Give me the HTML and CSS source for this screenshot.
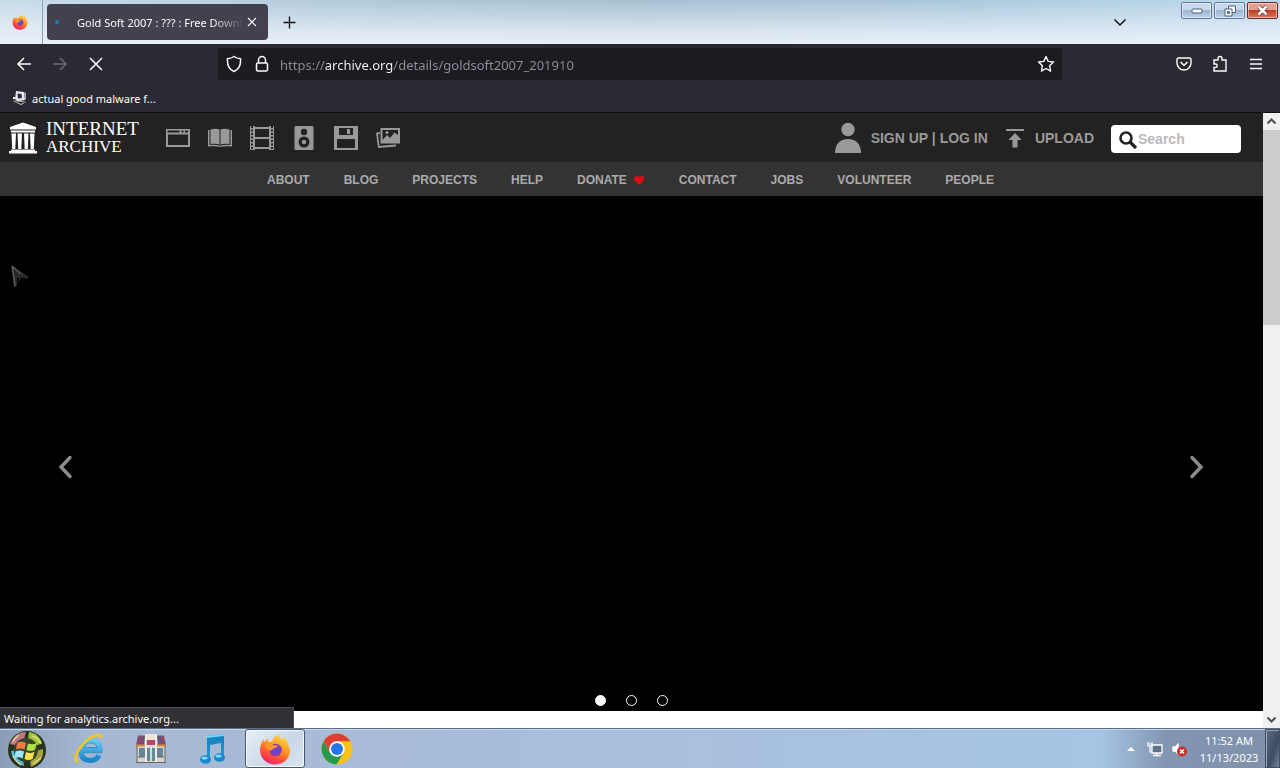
FILE: index.html
```html
<!DOCTYPE html>
<html lang="en">
<head>
<meta charset="utf-8">
<title>Gold Soft 2007 : ??? : Free Download</title>
<link rel="stylesheet" href="styles.css">
</head>
<body>
<svg width="0" height="0" class="defs" aria-hidden="true">
  <defs>
    <linearGradient id="ffFlame" x1="0.8" y1="0" x2="0.3" y2="1"><stop offset="0" stop-color="#ffe345"/><stop offset=".45" stop-color="#ff9525"/><stop offset=".75" stop-color="#ff4a3c"/><stop offset="1" stop-color="#e5207a"/></linearGradient>
    <radialGradient id="ffGlobe"><stop offset="0" stop-color="#5a4bd8"/><stop offset="1" stop-color="#8a3bb0"/></radialGradient>
    <linearGradient id="note" x1="0" y1="0" x2="0" y2="1"><stop offset="0" stop-color="#1580b8"/><stop offset="1" stop-color="#1d9be0"/></linearGradient>
    <linearGradient id="ieBlue" x1="0" y1="0" x2="0" y2="1"><stop offset="0" stop-color="#6cc8f2"/><stop offset="1" stop-color="#1b86cc"/></linearGradient>
    <symbol id="firefox" viewBox="0 0 32 32">
      <path fill="url(#ffFlame)" d="M19 1c0 2 2 4 4 5.500 1-1 1-2 .5-3.500 3 2 4.500 5 5 7.500 2 3 3 6 2.300 9.500C29.500 27 23.500 31.500 16 31.500 7.500 31.500 1 25 1 17c0-4 1.500-8 3.500-11 0 1.500.5 2.500 1 3l3-4c0 2 .5 3 1.500 4 1-.5 2-.5 3-.5 1-3 3-6 6-7.500z"/>
      <circle cx="16.500" cy="17" r="6.300" fill="url(#ffGlobe)"/>
      <path fill="#ff9428" d="M7 11.500c3-1.500 5.500-1 7.500.8 1.300 0 3 0 4.500.7-1 1.600-3 2-4.800 2.400-.6 1.400-2 1.800-3.200 2.400-2-1-4-3-4-6.300z"/>
    </symbol>
  </defs>
</svg>

<header class="browser">
  <div class="tabs">
    <div class="pinned"><svg width="16" height="16"><use href="#firefox"/></svg></div>
    <div class="tab">
      <span class="loading"></span>
      <span class="tab-title">Gold Soft 2007 : ??? : Free Downl</span>
      <button class="plain" aria-label="Close tab"><svg width="10" height="10" viewBox="0 0 10 10" fill="none" stroke="#f4f4f8" stroke-width="1.200"><path d="M1 1l8 8M9 1L1 9"/></svg></button>
    </div>
    <button class="plain new-tab" aria-label="New tab"><svg width="13" height="13" viewBox="0 0 13 13" stroke="#15141a" stroke-width="1.400"><path d="M6.500 0.500v12M.5 6.500h12"/></svg></button>
    <button class="plain list-tabs" aria-label="List all tabs"><svg width="14" height="9" viewBox="0 0 14 9" fill="none" stroke="#15141a" stroke-width="1.500"><path d="M1.500 1.500L7 7l5.500-5.500"/></svg></button>
    <div class="window-buttons">
      <button aria-label="Minimize"><svg width="12" height="6" viewBox="0 0 12 6"><rect x="1" y="1" width="10" height="4" rx="1" fill="#fff" stroke="#4b5c7a"/></svg></button>
      <button aria-label="Restore"><svg width="14" height="12" viewBox="0 0 14 12" fill="#fff" stroke="#4b5c7a"><path d="M5.500 1h7v6.500h-7z"/><path d="M2 4h7v7H2z"/><path fill="#8da6c8" d="M4.500 6.500h2v2h-2z"/></svg></button>
      <button class="close" aria-label="Close"><svg width="13" height="11" viewBox="0 0 13 11" fill="none"><path d="M2.500 1.500l8 8M10.500 1.500l-8 8" stroke="#713036" stroke-width="4"/><path d="M2.500 1.500l8 8M10.500 1.500l-8 8" stroke="#fff" stroke-width="2.500"/></svg></button>
    </div>
  </div>

  <div class="toolbar">
    <div class="history">
      <button class="plain" aria-label="Back"><svg width="16" height="14" viewBox="0 0 16 14" fill="none" stroke="#fbfbfe" stroke-width="1.500"><path d="M15 7H2M8 1L2 7l6 6"/></svg></button>
      <button class="plain" aria-label="Forward"><svg width="16" height="14" viewBox="0 0 16 14" fill="none" stroke="#6c6b73" stroke-width="1.500"><path d="M1 7h13M8 1l6 6-6 6"/></svg></button>
      <button class="plain" aria-label="Stop"><svg width="14" height="14" viewBox="0 0 14 14" fill="none" stroke="#fbfbfe" stroke-width="1.500"><path d="M1 1l12 12M13 1L1 13"/></svg></button>
    </div>
    <div class="address">
      <svg width="16" height="18" viewBox="0 0 16 18" fill="none" stroke="#fbfbfe" stroke-width="1.500"><path d="M8 1.500c2 1.500 4 2 6.500 2.200C15 10 13 14.500 8 16.500 3 14.500 1 10 1.500 3.700 4 3.500 6 3 8 1.500z"/></svg>
      <svg width="14" height="18" viewBox="0 0 14 18" fill="none" stroke="#fbfbfe" stroke-width="1.500"><rect x="1.500" y="8" width="11" height="8" rx="1.500"/><path d="M3.500 8V5a3.500 3.500 0 0 1 7 0v3"/></svg>
      <input class="url" type="text" aria-label="Address" value="https://archive.org/details/goldsoft2007_201910">
      <button class="plain" aria-label="Bookmark this page"><svg width="18" height="18" viewBox="0 0 18 18" fill="none" stroke="#fbfbfe" stroke-width="1.400" stroke-linejoin="round"><path d="M9 1.500l2.200 4.900 5.300.6-3.900 3.700 1 5.400L9 13.500l-4.600 2.600 1-5.400L1.500 7l5.300-.6z"/></svg></button>
    </div>
    <div class="tools">
      <button class="plain" aria-label="Save to Pocket"><svg width="16" height="14" viewBox="0 0 16 14" fill="none" stroke="#fbfbfe" stroke-width="1.400"><path d="M2.500 1h11Q15 1 15 2.500V6a7 7 0 0 1-14 0V2.500Q1 1 2.500 1z"/><path d="M4.500 5L8 8.300 11.500 5"/></svg></button>
      <button class="plain" aria-label="Extensions"><svg width="16" height="18" viewBox="0 0 16 18" fill="none" stroke="#fbfbfe" stroke-width="1.400"><path d="M2 5h4V3.500a2 2 0 0 1 4 0V5h4v11H2v-3.500h1.500a1.700 1.700 0 0 0 0-3.500H2z"/></svg></button>
      <button class="plain" aria-label="Menu"><svg width="14" height="12" viewBox="0 0 14 12" stroke="#fbfbfe" stroke-width="1.400"><path d="M1 1.500h12M1 6h12M1 10.500h12"/></svg></button>
    </div>
  </div>

  <div class="bookmarks">
    <a href="#"><svg width="16" height="16" viewBox="0 0 16 16"><path fill="#e8e8e2" d="M4 1l8 1 1 8-7 1-3-2z"/><path fill="#222755" d="M5.500 3.500l4 .5.5 4-4 .5z"/><path fill="#aaa" d="M12 2l2 1v6l-1 1z"/><path fill="#ddd" d="M1 11l5-1 8 2-5 3z"/><path stroke="#555" d="M3 11.500l6 2 4-1.500"/><path fill="#fff" d="M1 7h2v2H1z"/></svg>actual good malware f...</a>
  </div>
</header>

<div class="viewport">
  <main class="page">
    <div class="site-top">
      <a class="brand" href="#">
        <svg width="28" height="32" viewBox="0 0 28 32" fill="#fff"><path d="M14 0.500L27 5v2.500H1V5zM2 8.500h24v2H2zM2.500 11.500h4.500l-.7 15.500H3.200zM8.500 11.500h4.500l-.7 15.500H9.200zM15 11.500h4.500l-.7 15.500h-3.100zM21 11.500h4.500l-.7 15.500h-3.100zM2 27.500h24V29H2zM0 29h28v2.500H0z"/></svg>
        <span class="wordmark"><span>INTERNET</span><span class="second">ARCHIVE</span></span>
      </a>
      <nav class="media" aria-label="Media">
        <a href="#" aria-label="Web"><svg width="26" height="26" viewBox="0 0 26 26"><path fill="#999" fill-rule="evenodd" d="M1 4h24v18H1zm2 5.500V20h20V9.500zM2.500 5.500v2h12v-2zm14 0v2h2v-2zm3.500 0v2h3v-2z"/></svg></a>
        <a href="#" aria-label="Texts"><svg width="26" height="26" viewBox="0 0 26 26" fill="#999"><path d="M3.500 4.500C7 3.500 10 3.500 12.500 4.500v15c-3-1-6-1-9-.5zM22.500 4.500C19 3.500 16 3.500 13.500 4.500v15c3-1 6-1 9-.5zM1 5h1.500v15c4-.6 7-.5 9.500.5h2c2.500-1 5.500-1.100 9.500-.5V5H25v16.500c-4-.5-8-.5-10 .3h-4c-2-.8-6-.8-10-.3z"/></svg></a>
        <a href="#" aria-label="Video"><svg width="26" height="26" viewBox="0 0 26 26"><path fill="#999" fill-rule="evenodd" d="M1 1h24v24H1zm5 3v8h14V4zm0 10v8h14v-8z"/><path stroke="#222" stroke-width="2" stroke-dasharray="2 1.500" d="M3 1v24M23 1v24"/><path stroke="#222" d="M6 1.500h14M6 24.500h14"/></svg></a>
        <a href="#" aria-label="Audio"><svg width="26" height="26" viewBox="0 0 26 26"><rect x="3.500" y="1" width="19" height="24" rx="1.500" fill="#999"/><circle cx="13" cy="7" r="3.200" fill="#222"/><circle cx="13" cy="17" r="5.500" fill="#222"/><circle cx="13" cy="17" r="2.200" fill="#999"/></svg></a>
        <a href="#" aria-label="Software"><svg width="26" height="26" viewBox="0 0 26 26"><path fill="#999" fill-rule="evenodd" d="M1 1h24v24H1zm5 2v7h14V3zm8 1h3v5h-3zM4 14v9h18v-9z"/></svg></a>
        <a href="#" aria-label="Images"><svg width="26" height="26" viewBox="0 0 26 26"><path fill="none" stroke="#999" stroke-width="1.800" d="M5 8l-3 .5 1.800 13.500L21 20.500"/><path fill="#999" fill-rule="evenodd" d="M5.500 3H25v15.500H5.500zm2 2v10l4.500-5 3 3 4.500-5.500L23 10V5z"/><circle cx="12" cy="7.500" r="1.500" fill="#999"/></svg></a>
      </nav>
      <div class="account">
        <a class="login" href="#"><svg width="26" height="32" viewBox="0 0 26 32" fill="#999"><circle cx="13" cy="7.500" r="6.700"/><path d="M0 31c0-9 5-14 13-14s13 5 13 14z"/></svg><span>SIGN UP | LOG IN</span></a>
        <a class="upload" href="#"><svg width="20" height="20" viewBox="0 0 20 20" fill="#999"><path d="M1 1h18v2H1zM10 5l6.500 7H12.500v7.500h-5V12H3.500z"/></svg><span>UPLOAD</span></a>
        <label class="search"><svg width="20" height="20" viewBox="0 0 20 20" fill="none" stroke="#222"><circle cx="8" cy="8" r="5.500" stroke-width="2.600"/><path stroke-width="3.200" d="M12 12l6 6"/></svg><input type="text" placeholder="Search" aria-label="Search"></label>
      </div>
    </div>
    <nav class="site-nav" aria-label="Site">
      <a href="#">ABOUT</a><a href="#">BLOG</a><a href="#">PROJECTS</a><a href="#">HELP</a><a class="donate" href="#">DONATE <svg width="12" height="10" viewBox="0 0 12 10"><path fill="#e00b16" d="M6 10L1.500 5.500C-.5 3 2.500-1 6 2c3.500-3 6.500 1 4.500 3.500z"/></svg></a><a href="#">CONTACT</a><a href="#">JOBS</a><a href="#">VOLUNTEER</a><a href="#">PEOPLE</a>
    </nav>
    <section class="theatre" aria-label="Carousel">
      <div class="arrows">
        <button class="plain" aria-label="Previous"><svg width="16" height="24" viewBox="0 0 16 24" fill="none" stroke="#8c8c8c" stroke-width="3.400" stroke-linecap="round"><path d="M12 2.500L3 12l9 9.500"/></svg></button>
        <button class="plain" aria-label="Next"><svg width="16" height="24" viewBox="0 0 16 24" fill="none" stroke="#8c8c8c" stroke-width="3.400" stroke-linecap="round"><path d="M3 2.500L12 12l-9 9.500"/></svg></button>
      </div>
      <div class="dots"><button class="dot current" aria-label="Slide 1"></button><button class="dot" aria-label="Slide 2"></button><button class="dot" aria-label="Slide 3"></button></div>
      <svg class="pointer" width="20" height="24" viewBox="0 0 20 24"><path fill="#2a2a2a" d="M1 1l17 11-2 2-6-1.500L5 22H3z"/><path fill="none" stroke="#5c5c5c" stroke-width="1.500" d="M1 1l3 20M1 1l9 8"/><path fill="#000" d="M8 14l-2 7V12z"/></svg>
    </section>
  </main>
  <div class="scrollbar" aria-hidden="true">
    <svg width="17" height="17" viewBox="0 0 17 17" fill="none" stroke="#505050" stroke-width="2"><path d="M4.500 10.500l4-4 4 4"/></svg>
    <div class="track"><div class="thumb"></div></div>
    <svg width="17" height="17" viewBox="0 0 17 17" fill="none" stroke="#505050" stroke-width="2"><path d="M4.500 6.500l4 4 4-4"/></svg>
  </div>
  <div class="status">Waiting for analytics.archive.org...</div>
</div>

<footer class="taskbar">
  <button class="plain start" aria-label="Start"><svg width="40" height="40" viewBox="0 0 40 40"><circle cx="20" cy="21" r="19" fill="#26331f"/><path fill="#bf7787" d="M3 15C6 7 12 3 19 3l-2 7-9 6z"/><path fill="#9cc435" d="M22 3c7 1 11 5 13 11l-6 3-8-6z"/><path fill="#58b8d8" d="M4 22l6-1 6 9 1 7C10 35 5 30 4 22z"/><path fill="#a8a33a" d="M29 22l7-2c1 9-4 15-12 18l-1-7z"/><circle cx="19" cy="21" r="12" fill="#33452a"/><path fill="#f07a45" d="M10 14c3-2 6-2 9 0l-1.500 6.500c-3-1.500-5-1.500-8.500 0z"/><path fill="#b5e04a" d="M21 14.500c3 1.200 6 1 9-.8l-2 7c-3 1.500-6 1.500-8.500.3z"/><path fill="#9fe6ff" d="M8.500 22.500c3-1.500 6-1.500 8.500 0l-1.500 7c-3-1.800-5.500-1.500-8 0z"/><path fill="#ffe14f" d="M19 23c3 1.300 5.500 1.300 8.500-.3l-2 7.300c-3 1.500-5.500 1.200-8 0z"/><path fill="none" stroke="#e3dc86" stroke-width="1.300" d="M6 27c2 5 5 7 8 9M25 7c4 1 7 4 9 8M26 35l8-6M6 13c1-3 3-5 6-7"/></svg></button>
  <button class="plain app" aria-label="Internet Explorer"><svg width="32" height="32" viewBox="0 0 34 34"><path fill="none" stroke="url(#ieBlue)" stroke-width="5.500" d="M9 18h20c0-7-5-10.500-10-10.500S8.500 11.500 8.500 19 13 29 19 29c4 0 7-2 8.500-5.500"/><path fill="none" stroke="#2185bd" stroke-width=".8" d="M12 15.500c1-3 3-5 7-5s6 2 6.500 5zM11.500 21H31"/><path fill="none" stroke="#efc52d" stroke-width="3" d="M5 31C-2 26 11 7 23 3c4-1.500 7-1 7 2"/></svg></button>
  <button class="plain app" aria-label="Store"><svg width="32" height="32" viewBox="0 0 32 32"><path fill="#d5d3cf" d="M2 12h28v17H2z"/><path fill="#72507c" d="M3 3h7l-1 9H1zM22 3h7l2 9h-8z"/><path fill="#eee2d6" d="M10 1h12v12H10z"/><path stroke="#a2405c" stroke-width="2" d="M5 3v9M28 3v9"/><path fill="#b94469" d="M11 7h10v5H11z"/><path stroke="#d88b39" stroke-width="2" d="M1 12.500h9M22 12.500h9"/><path fill="#668796" d="M4 15h6v9H4zM22 15h6v9h-6zM12 15h8v13h-8z"/><path stroke="#f8f6ee" stroke-width="1.500" d="M11 2v28M21 2v28M16 14v14"/><path stroke="#6d6462" d="M2 13v16M30 13v16M1 29.500h30M3 24h7M22 24h7M3 3h7M22 3h7"/></svg></button>
  <button class="plain app" aria-label="Music"><svg width="30" height="32" viewBox="0 0 30 32"><path fill="url(#note)" d="M9 3l17-2v24h-3V10l-11 2v15H9z"/><ellipse cx="7.500" cy="26.500" rx="5.500" ry="4.300" fill="#1689d1"/><ellipse cx="21.500" cy="24.500" rx="5.500" ry="4.300" fill="#1689d1"/><path fill="#71d6ff" d="M9 3l17-2v2L9 5z"/><ellipse cx="6.500" cy="25" rx="3" ry="1.500" fill="#83dbff"/><ellipse cx="20.500" cy="23" rx="3" ry="1.500" fill="#83dbff"/></svg></button>
  <button class="plain app active" aria-label="Firefox"><svg width="32" height="32"><use href="#firefox"/></svg></button>
  <button class="plain app" aria-label="Chrome"><svg width="32" height="32" viewBox="0 0 32 32"><circle cx="16" cy="16" r="15.500" fill="#fbc116"/><path fill="#de4033" d="M2.600 8.200A15.500 15.500 0 0 1 29.400 8.300H16L9.300 20z"/><path fill="#279b4b" d="M2.600 8.200A15.500 15.500 0 0 0 15.500 31.500L22.700 20 16 23.500 9.300 20z"/><circle cx="16" cy="16" r="7.800" fill="#fff"/><circle cx="16" cy="16" r="6" fill="#2674e5"/></svg></button>
  <div class="tray">
    <button class="plain" aria-label="Show hidden icons"><svg width="8" height="5" viewBox="0 0 8 5"><path fill="#fff" d="M0 5l4-4 4 4z"/></svg></button>
    <button class="plain" aria-label="Network"><svg width="16" height="16" viewBox="0 0 16 16"><path fill="#5f7089" stroke="#fff" stroke-width="1.300" d="M5 4h10v8H5zM9.500 12v2.500M6 14.500h8"/><path fill="none" stroke="#fff" stroke-width="1.200" d="M1 1v4h4V1M3 5v6h2M2 3h2"/></svg></button>
    <button class="plain" aria-label="Volume muted"><svg width="16" height="16" viewBox="0 0 16 16"><path fill="#fff" stroke="#7c8799" stroke-width=".6" d="M1 5h3l4-4v14l-4-4H1z"/><circle cx="11" cy="10.500" r="5" fill="#cf2b27"/><path stroke="#fff" stroke-width="1.600" d="M9 8.500l4 4M13 8.500l-4 4"/></svg></button>
    <time class="clock" datetime="2023-11-13T11:52"><span>11:52 AM</span><span>11/13/2023</span></time>
    <button class="show-desktop" aria-label="Show desktop"></button>
  </div>
</footer>
</body>
</html>
```
FILE: styles.css
```css
* { box-sizing: border-box; }

body {
  margin: 0;
  height: 100vh;
  display: flex;
  flex-direction: column;
  overflow: hidden;
  background: #fff;
  font-family: "Noto Sans", "Open Sans", sans-serif;
  font-size: 11px;
}

svg { display: block; flex: none; }
a { color: inherit; text-decoration: none; }
.defs { position: absolute; }

.plain {
  display: flex;
  align-items: center;
  justify-content: center;
  border: 0;
  padding: 0;
  background: none;
}

/* Tab strip */
.tabs {
  display: flex;
  height: 44px;
  background: linear-gradient(rgba(255, 255, 255, 0) 0, rgba(235, 241, 248, .75) 32px, #e8eff8 44px),
    linear-gradient(90deg, #c8dcea, #b2cadb 25%, #a8c0d2 50%, #abc8dd 75%, #bcd8ec);
}
.pinned {
  display: grid;
  place-items: center;
  width: 43px;
  padding-right: 3px;
  border-right: 1px solid #8e9fb0;
}
.tab {
  display: flex;
  align-items: center;
  width: 221px;
  margin: 4px 0 4px 4px;
  padding: 0 11px 0 8px;
  border-radius: 4px;
  background: #42414d;
  color: #fbfbfe;
}
.loading { flex: none; width: 4px; height: 4px; border-radius: 2px; background: #2c78bb; }
.tab-title {
  flex: 1;
  min-width: 0;
  margin: 0 2px 0 18px;
  overflow: hidden;
  white-space: nowrap;
  mask-image: linear-gradient(90deg, #000 80%, transparent);
}
.new-tab { width: 42px; }
.list-tabs { margin-left: auto; width: 30px; }
.window-buttons { display: flex; gap: 2px; margin: 2px 2px 0 46px; }
.window-buttons button {
  display: grid;
  place-items: center;
  width: 31px;
  height: 17px;
  padding: 0;
  border: 1px solid #5f7899;
  border-radius: 2px;
  background: linear-gradient(#c6d9ec 45%, #9cb6d1 50%, #bcd2e9);
  box-shadow: inset 0 0 0 1px rgba(255, 255, 255, .5);
}
.window-buttons .close { border-color: #6b2529; background: linear-gradient(#e4a08e 45%, #bd3d26 50%, #d9795a); }

/* Toolbars */
.toolbar {
  display: flex;
  align-items: center;
  height: 40px;
  background: #2b2a33;
}
.history { display: flex; width: 218px; padding-left: 6px; }
.history button { width: 36px; height: 32px; }
.address {
  display: flex;
  flex: 1;
  align-items: center;
  gap: 13px;
  height: 32px;
  padding: 0 7px 0 8px;
  border-radius: 2px;
  background: #1c1b22;
}
.url {
  flex: 1;
  min-width: 0;
  height: 28px;
  margin-left: -2px;
  padding: 2px 0 0;
  border: 0;
  outline: 0;
  font-family: "Noto Sans", "Open Sans", sans-serif;
  font-size: 13px;
  color: transparent;
  background: linear-gradient(90deg, #8f8f98 45px, #fbfbfe 45px, #fbfbfe 113px, #8f8f98 113px);
  background-clip: text;
  -webkit-background-clip: text;
}
.tools { display: flex; width: 218px; padding-right: 6px; justify-content: flex-end; }
.tools button { width: 36px; height: 32px; }
.bookmarks {
  display: flex;
  align-items: center;
  height: 29px;
  padding-left: 12px;
  border-bottom: 1px solid #0e0e12;
  background: #2b2a33;
  color: #fbfbfe;
}
.bookmarks a { display: flex; align-items: center; gap: 4px; }

/* Page area */
.viewport { position: relative; display: flex; flex: 1; min-height: 0; }
.page {
  display: flex;
  flex: 1;
  flex-direction: column;
  min-width: 0;
  padding-bottom: 17px;
  background: #fff;
  color: #999;
  font-family: "Liberation Sans", Arial, sans-serif;
  font-weight: bold;
}
.site-top {
  display: flex;
  align-items: center;
  height: 49px;
  padding: 0 22px 0 9px;
  background: #222;
  font-size: 14px;
}
.brand { display: flex; align-items: center; gap: 9px; color: #fff; }
.wordmark {
  display: flex;
  flex-direction: column;
  width: 112px;
  font: 19px/18px "Liberation Serif", "Times New Roman", serif;
}
.wordmark .second { font-size: 17px; }
.media { display: flex; gap: 16px; margin-left: 7px; }
.account { display: flex; align-items: center; margin-left: auto; }
.login, .upload { display: flex; align-items: center; gap: 10px; margin-right: 17px; white-space: nowrap; }
.search {
  display: flex;
  align-items: center;
  width: 130px;
  height: 28px;
  margin-top: 2px;
  padding-left: 7px;
  border-radius: 4px;
  background: #fff;
}
.search svg { margin-top: 3px; }
.search input {
  flex: 1;
  min-width: 0;
  padding: 0;
  border: 0;
  outline: 0;
  background: none;
  font: bold 14px "Liberation Sans", Arial, sans-serif;
}
.search input::placeholder { color: #bbb; opacity: 1; }
.site-nav {
  display: flex;
  align-items: center;
  justify-content: center;
  gap: 34px;
  height: 34px;
  padding: 2px 2px 0 0;
  background: #333;
  color: #aaa;
  font-size: 12px;
}
.donate { display: flex; align-items: center; gap: 6px; }

.theatre {
  position: relative;
  display: flex;
  flex: 1;
  flex-direction: column;
  background: #000;
}
.arrows {
  display: flex;
  flex: 1;
  align-items: center;
  justify-content: space-between;
  padding: 42px 58px 0;
}
.dots { display: flex; justify-content: center; gap: 20px; padding-bottom: 5px; }
.dot {
  width: 11px;
  height: 11px;
  padding: 0;
  border: 1px solid #fff;
  border-radius: 50%;
  background: none;
}
.dot.current { background: #fff; }
.pointer { position: absolute; left: 11px; top: 69px; }

.scrollbar {
  display: flex;
  flex-direction: column;
  width: 17px;
  background: #f0f0f0;
}
.track { flex: 1; }
.thumb { height: 33.500%; background: #cdcdcd; }
.status {
  position: absolute;
  left: 0;
  bottom: 0;
  width: 294px;
  height: 21px;
  padding-left: 4px;
  border: 1px solid #4c4c55;
  border-width: 1px 1px 0 0;
  background: #313035;
  color: #fbfbfe;
  line-height: 22px;
}

/* Taskbar */
.taskbar {
  display: flex;
  height: 40px;
  border-top: 1px solid #5d6f87;
  background: linear-gradient(90deg, #8a9db6 0, #a6b8d2 90px, #a9bfdd 50%, #a6c4e4 86%, #8296b2 91%, #8090a9);
  box-shadow: inset 0 1px #c7d8eb;
}
.start { width: 54px; overflow: hidden; }
.app { width: 60px; margin-right: 2px; }
.start + .app { margin-left: 5px; }
.app.active {
  border: 1px solid #47566c;
  border-radius: 3px;
  background: linear-gradient(135deg, #e7eef6, #c8d7e7 60%, #dbe6f1);
  box-shadow: inset 0 0 0 1px #f5f9fd;
}
.tray { display: flex; align-items: center; gap: 8px; margin-left: auto; }
.tray button:first-child { width: 16px; }
.clock {
  display: flex;
  flex-direction: column;
  width: 68px;
  color: #fff;
  line-height: 17px;
  text-align: center;
}
.show-desktop {
  align-self: stretch;
  width: 15px;
  margin-left: -6px;
  border: 1px solid #414d60;
  background: linear-gradient(110deg, #5d6c83, #3e4c61 60%, #75849a);
  box-shadow: inset 1px 1px #98a7bc;
}
```
